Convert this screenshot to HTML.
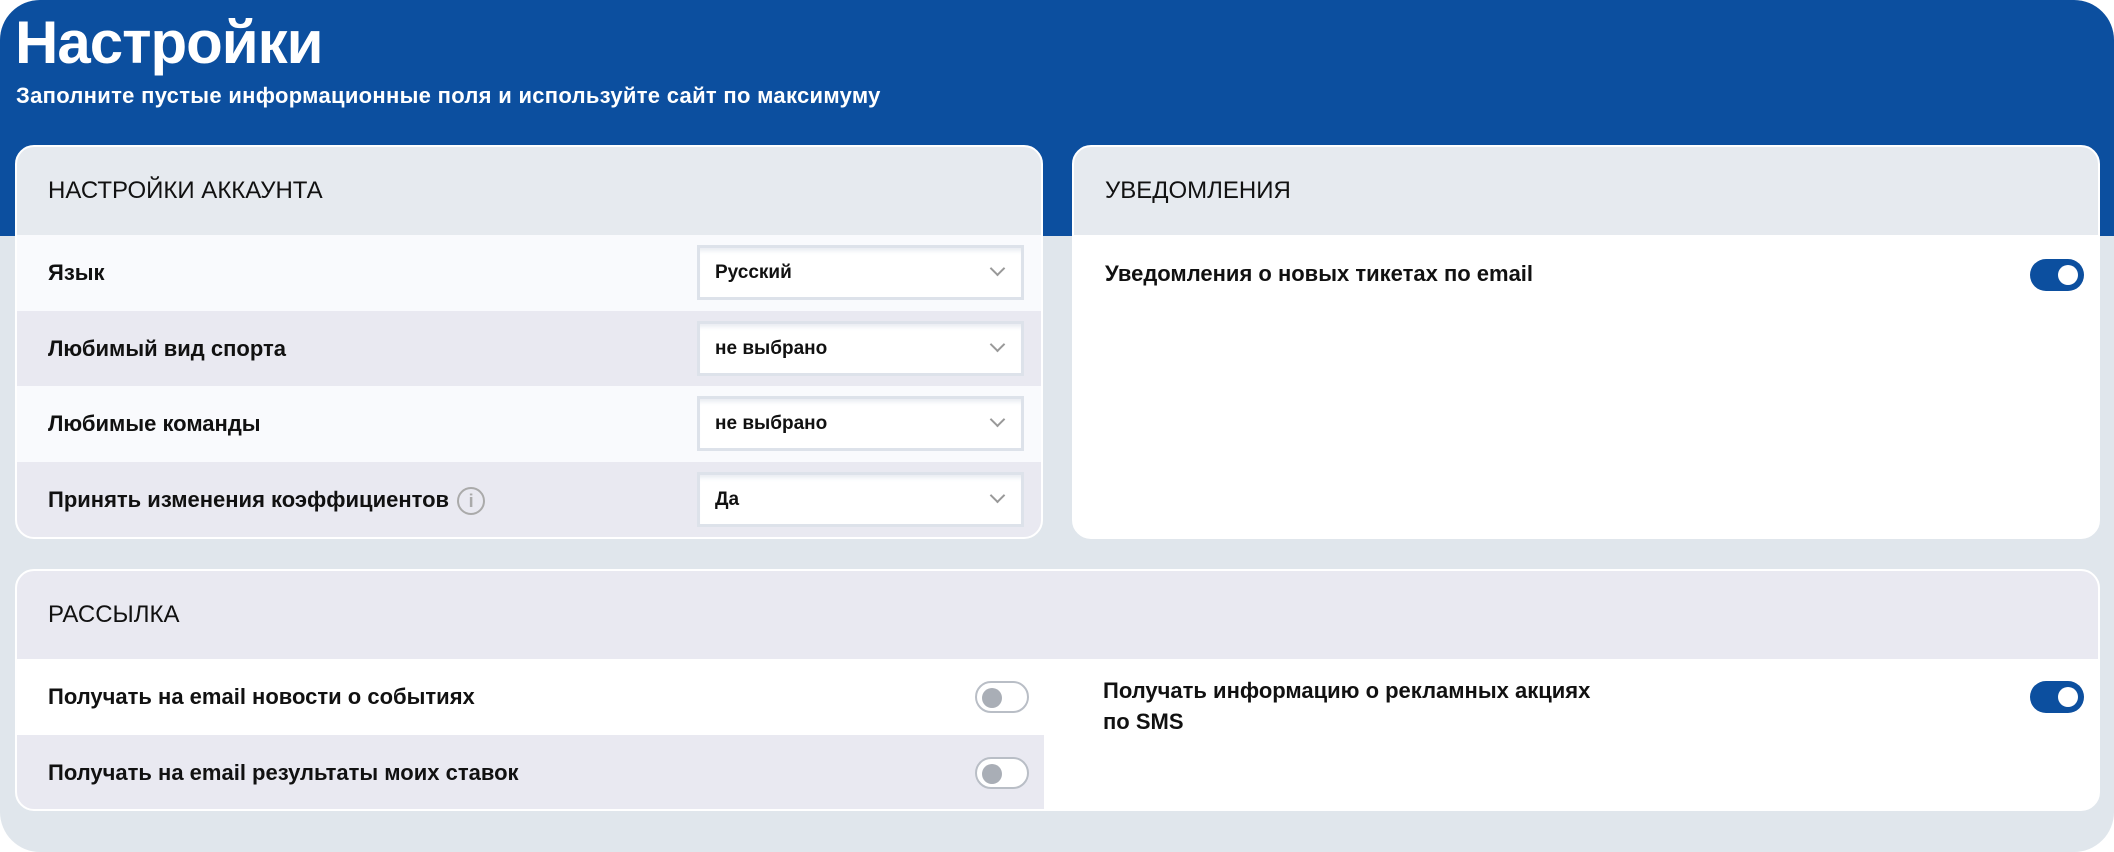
<!DOCTYPE html>
<html><head><meta charset="utf-8"><style>
*{box-sizing:border-box;margin:0;padding:0}
body{width:2114px;height:852px;background:#fff;font-family:"Liberation Sans",sans-serif;color:#111;overflow:hidden}
.wrap{position:absolute;left:0;top:0;width:2114px;height:852px;border-radius:40px;background:#e0e6ec;overflow:hidden}
.hero{position:absolute;left:0;top:0;width:2114px;height:236px;background:#0c4f9f}
h1{position:absolute;left:15px;top:8px;font-size:60px;font-weight:700;color:#fff;letter-spacing:-1px}
.sub{position:absolute;left:16px;top:83px;font-size:22px;font-weight:700;color:#fff;letter-spacing:0.3px}
.card{position:absolute;background:#fff;border:2px solid #fff;border-radius:19px;overflow:hidden}
.hd{height:88px;background:#e6eaef;padding-left:31px;line-height:88px;font-size:24px;font-weight:400}
.row{height:75.5px;position:relative;font-size:22px;font-weight:700;padding-left:31px;line-height:75px}
.w{background:#f9fafd}.g{background:#e9e9f1}
.sel{position:absolute;left:680px;top:10px;width:327px;height:55px;border:3px solid #dde2ea;background:#fff;box-shadow:inset 0 6px 4px -3px #e9edf2;font-size:19px;line-height:49px;padding-left:15px}
.sel:after{content:"";position:absolute;right:18px;top:15px;width:9px;height:9px;border-right:2px solid #999;border-bottom:2px solid #999;transform:rotate(45deg)}
.tg{position:absolute;width:54px;height:32px;border-radius:16px;background:#0c4f9f}
.tg:after{content:"";position:absolute;right:6px;top:6px;width:20px;height:20px;border-radius:50%;background:#fff}
.off{background:#fff;border:2px solid #b9bec6}
.off:after{left:5px;top:5px;right:auto;background:#a9aeb6}
.info{display:inline-block;width:28px;height:28px;border:2px solid #aaa;border-radius:50%;color:#aaa;font-size:18px;line-height:24px;text-align:center;vertical-align:middle;margin-left:8px;font-weight:700}
</style></head><body><div class="wrap">
<div class="hero"></div>
<h1>Настройки</h1>
<div class="sub">Заполните пустые информационные поля и используйте сайт по максимуму</div>

<div class="card" style="left:15px;top:145px;width:1028px;height:394px">
<div class="hd">НАСТРОЙКИ АККАУНТА</div>
<div class="row w">Язык<div class="sel">Русский</div></div>
<div class="row g">Любимый вид спорта<div class="sel">не выбрано</div></div>
<div class="row w">Любимые команды<div class="sel">не выбрано</div></div>
<div class="row g">Принять изменения коэффициентов<span class="info">i</span><div class="sel">Да</div></div>
</div>

<div class="card" style="left:1072px;top:145px;width:1028px;height:394px">
<div class="hd">УВЕДОМЛЕНИЯ</div>
<div class="row w" style="background:#fff;line-height:1;padding-top:28px;font-size:22px">Уведомления о новых тикетах по email</div>
<div class="tg" style="left:956px;top:112px"></div>
</div>

<div class="card" style="left:15px;top:569px;width:2085px;height:242px">
<div class="hd" style="background:#e9e9f1">РАССЫЛКА</div>
<div class="row w" style="width:1027px;background:#fff">Получать на email новости о событиях<div class="tg off" style="left:958px;top:22px"></div></div>
<div class="row g" style="width:1027px">Получать на email результаты моих ставок<div class="tg off" style="left:958px;top:22px"></div></div>
<div style="position:absolute;left:1086px;top:104px;font-size:22px;font-weight:700;line-height:31px">Получать информацию о рекламных акциях<br>по SMS</div>
<div class="tg" style="left:2013px;top:110px"></div>
</div>
</div></body></html>
